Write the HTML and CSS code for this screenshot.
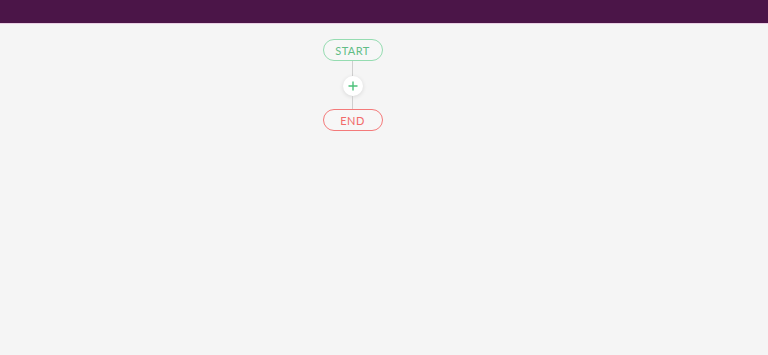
FILE: index.html
```html
<!DOCTYPE html>
<html lang="en">
<head>
    <meta charset="UTF-8">
    <meta name="viewport" content="width=device-width, initial-scale=1.0">
    <title>Flow</title>
    <link rel="stylesheet" href="styles.css">
</head>
<body>

    <div class="topbar"></div>

    <div class="canvas">
        <div class="flow">
            <div class="node start">START</div>
            <div class="line"></div>
            <div class="add">
                <svg width="10" height="10" viewBox="0 0 10 10">
                    <path d="M5 0.5V9.5M0.5 5H9.5" stroke="#4cc17a" stroke-width="1.4" fill="none"/>
                </svg>
            </div>
            <div class="line short"></div>
            <div class="node end">END</div>
        </div>
    </div>

</body>
</html>
```

FILE: styles.css
```css
*{margin: 0;
    padding: 0;
    box-sizing: border-box;
}
body{
    background-color: #f5f5f5;
    font-family: Lato, "Open Sans", sans-serif;
    height: 355px;
}
.topbar{
    height: 24px;
    background-color: #4b1548;
    border-bottom: 1px solid #e9cfe4;
}
.canvas{
    width: 705px;
    padding-top: 15px;
}
.flow{
    display: flex;
    flex-direction: column;
    align-items: center;
}
.node{
    width: 60px;
    height: 22px;
    border-radius: 11px;
    border: 1.5px solid;
    background-color: #f7f7f7;
    font-size: 11px;
    letter-spacing: 0.4px;
    display: flex;
    align-items: center;
    justify-content: center;
}
.start{
    border-color: #95dcb1;
    color: #62bd86;
}
.end{
    border-color: #f47a7a;
    color: #f26a6a;
}
.line{
    width: 1px;
    height: 15px;
    background-color: #cfcfcf;
}
.line.short{
    height: 13px;
}
.add{
    width: 20px;
    height: 20px;
    border-radius: 50%;
    background-color: #fff;
    box-shadow: 0 1px 4px rgba(0,0,0,0.12);
    display: flex;
    align-items: center;
    justify-content: center;
}
```
